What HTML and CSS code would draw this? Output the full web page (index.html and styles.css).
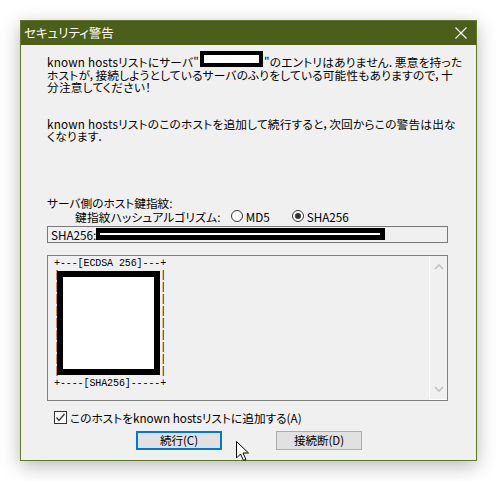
FILE: index.html
```html
<!DOCTYPE html>
<html lang="ja">
<head>
<meta charset="utf-8">
<title>セキュリティ警告</title>
<link rel="stylesheet" href="styles.css">
</head>
<body>
<div class="stage">
  <div class="window">
    <div class="titlebar">
      <span class="title">セキュリティ警告</span>
      <svg class="close" width="12" height="12" viewBox="0 0 12 12"><path d="M0.5 0.5 L11.5 11.5 M11.5 0.5 L0.5 11.5" stroke="#ffffff" stroke-width="1.1" fill="none"/></svg>
    </div>
    <div class="content">
      <p class="msg">known hostsリストにサーバ"<span class="redact-inline"></span>"のエントリはありません．悪意を持った<br>ホストが，接続しようとしているサーバのふりをしている可能性もありますので，十<br>分注意してください！</p>
      <p class="msg msg2">known hostsリストのこのホストを追加して続行すると，次回からこの警告は出な<br>くなります．</p>
      <div class="fp-label">サーバ側のホスト鍵指紋:</div>
      <div class="algo-row">
        <span class="algo-label">鍵指紋ハッシュアルゴリズム:</span>
        <span class="radio md5"><span class="rb"></span>MD5</span>
        <span class="radio"><span class="rb on"></span>SHA256</span>
      </div>
      <div class="fp-field"><span class="fp-text">SHA256:</span><span class="redact-bar"></span></div>
      <div class="art-box">
<pre class="art">+---[ECDSA 256]---+
|                 |
|                 |
|                 |
|                 |
|                 |
|                 |
|                 |
|                 |
|                 |
+----[SHA256]-----+</pre>
        <div class="art-redact"></div>
        <div class="scrollbar">
          <svg width="10" height="6" viewBox="0 0 10 6"><path d="M1 5 L5 1 L9 5" stroke="#c2c2c2" stroke-width="1.6" fill="none"/></svg>
          <svg width="10" height="6" viewBox="0 0 10 6"><path d="M1 1 L5 5 L9 1" stroke="#c2c2c2" stroke-width="1.6" fill="none"/></svg>
        </div>
      </div>
      <div class="check-row">
        <span class="cb"><svg width="11" height="11" viewBox="0 0 11 11"><path d="M1.5 5.5 L4 8.5 L9.5 2" stroke="#333333" stroke-width="1.3" fill="none"/></svg></span>
        <span>このホストをknown hostsリストに追加する(A)</span>
      </div>
      <div class="buttons">
        <span class="btn default">続行(C)</span>
        <span class="btn">接続断(D)</span>
      </div>
    </div>
  </div>
  <svg class="cursor" width="14" height="21" viewBox="0 0 14 21"><path d="M0.5 0.5 L0.5 17 L4.5 13 L7.5 19.5 L10 18.5 L7 12 L12.5 12 Z" fill="#ffffff" stroke="#000000" stroke-width="1" stroke-linejoin="miter"/></svg>
</div>
</body>
</html>
```

FILE: styles.css
```css
html, body {
  margin: 0;
  padding: 0;
  background: #ffffff;
}
body {
  width: 497px;
  height: 481px;
  overflow: hidden;
  font-family: "Noto Sans CJK JP", "Noto Sans", sans-serif;
  font-feature-settings: "palt";
  color: #000000;
}
.stage {
  position: relative;
  padding: 20px 0 0 20px;
}
.window {
  width: 457px;
  height: 441px;
  box-sizing: border-box;
  border: 1px solid #5e782a;
  background: #f0f0f0;
  box-shadow: 0 5px 18px rgba(0, 0, 0, 0.28);
}
.titlebar {
  height: 24px;
  background: #4b5e1a;
  display: flex;
  align-items: center;
  justify-content: space-between;
  padding: 0 9px 0 3px;
}
.title {
  color: #ffffff;
  font-size: 12.5px;
  line-height: 24px;
}
.content {
  padding: 11px 28px 0 26px;
  font-size: 11.7px;
}
.msg {
  margin: 0;
  line-height: 12.5px;
  white-space: nowrap;
  letter-spacing: 0.2px;
}
.msg2 {
  margin-top: 24px;
}
.redact-inline {
  display: inline-block;
  width: 63px;
  height: 16px;
  box-sizing: border-box;
  border: 4px solid #000000;
  background: #ffffff;
  vertical-align: baseline;
  margin: -8px 1px 0;
}
.fp-label {
  margin-top: 53px;
  line-height: 13px;
}
.algo-row {
  display: flex;
  align-items: center;
  height: 15px;
  padding-left: 28px;
}
.algo-label {
  margin-right: 10px;
  letter-spacing: 0.2px;
}
.radio {
  display: flex;
  align-items: center;
  gap: 3px;
}
.radio.md5 {
  width: 61px;
}
.rb {
  width: 12px;
  height: 12px;
  box-sizing: border-box;
  border: 1px solid #333333;
  border-radius: 50%;
  background: #ffffff;
  display: flex;
  align-items: center;
  justify-content: center;
}
.rb.on::after {
  content: "";
  width: 6px;
  height: 6px;
  border-radius: 50%;
  background: #333333;
}
.fp-field {
  margin-top: 2px;
  height: 17px;
  box-sizing: border-box;
  border: 1px solid #7a7a7a;
  display: flex;
  align-items: center;
  padding-left: 3px;
}
.fp-text {
  width: 45px;
}
.redact-bar {
  width: 289px;
  height: 12px;
  background: #000000;
  position: relative;
}
.redact-bar::after {
  content: "";
  position: absolute;
  left: 4px;
  right: 5px;
  top: 5px;
  height: 2px;
  background: #ffffff;
}
.art-box {
  position: relative;
  margin-top: 12px;
  height: 146px;
  box-sizing: border-box;
  border: 1px solid #828282;
  display: flex;
  justify-content: space-between;
}
.art {
  margin: 0;
  padding: 2px 0 0 6px;
  font-family: "Liberation Mono", "DejaVu Sans Mono", monospace;
  font-size: 10px;
  line-height: 12.1px;
  letter-spacing: -0.1px;
}
.art-redact {
  position: absolute;
  left: 9px;
  top: 15px;
  width: 103px;
  height: 104px;
  box-sizing: border-box;
  border: 6px solid #000000;
  background: #ffffff;
}
.scrollbar {
  width: 18px;
  border-left: 1px solid #ffffff;
  border-bottom: 1px solid #ffffff;
  display: flex;
  flex-direction: column;
  justify-content: space-between;
  align-items: center;
  padding: 8px 0 7px;
  box-sizing: border-box;
}
.check-row {
  display: flex;
  align-items: center;
  gap: 3px;
  margin-top: 10px;
  padding-left: 7px;
  height: 14px;
}
.cb {
  width: 13px;
  height: 13px;
  box-sizing: border-box;
  border: 1px solid #333333;
  background: #ffffff;
  display: flex;
  align-items: center;
  justify-content: center;
}
.buttons {
  display: flex;
  gap: 54px;
  padding-left: 89px;
  margin-top: 6px;
}
.btn {
  width: 86px;
  height: 19px;
  box-sizing: border-box;
  border: 1px solid #adadad;
  background: #e1e1e1;
  display: flex;
  align-items: center;
  justify-content: center;
  font-size: 11.5px;
}
.btn.default {
  border: 2px solid #0078d7;
}
.cursor {
  position: absolute;
  left: 236px;
  top: 441px;
}
```
